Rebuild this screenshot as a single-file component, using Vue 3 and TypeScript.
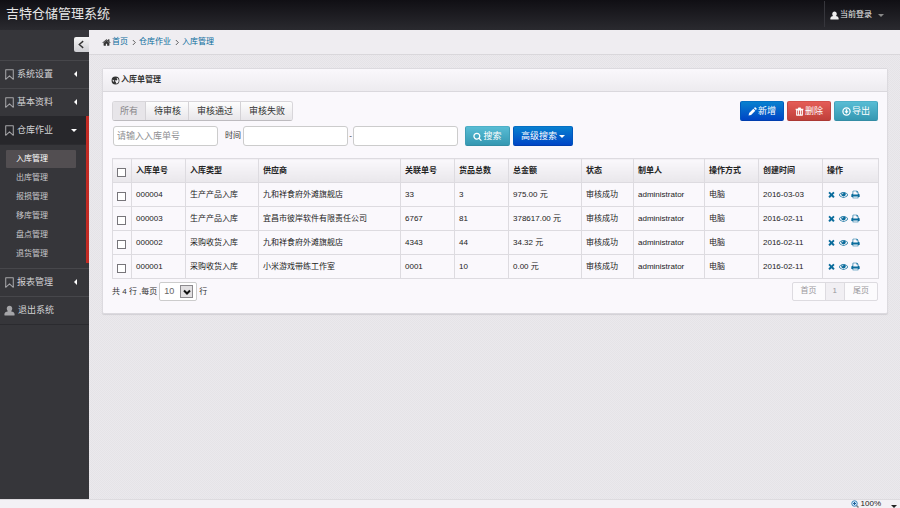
<script setup lang="ts">
import { ref, computed } from 'vue'

interface Column { title: string; width: number }
interface Order {
  no: string; type: string; supplier: string; ref: string; qty: string
  amount: string; status: string; creator: string; mode: string; date: string
}

const tabs = ['所有', '待审核', '审核通过', '审核失败']
const activeTab = ref(0)
const subItems = ['入库管理', '出库管理', '报损管理', '移库管理', '盘点管理', '退货管理']
const keyword = ref('')
const from = ref('')
const to = ref('')
const pageSize = ref('10')
const picked = ref<string[]>([])

const columns: Column[] = [
  { title: '入库单号', width: 54 },
  { title: '入库类型', width: 73 },
  { title: '供应商', width: 142 },
  { title: '关联单号', width: 54 },
  { title: '货品总数', width: 54 },
  { title: '总金额', width: 73 },
  { title: '状态', width: 52 },
  { title: '制单人', width: 71 },
  { title: '操作方式', width: 54 },
  { title: '创建时间', width: 64 },
  { title: '操作', width: 56 },
]

const common = { status: '审核成功', creator: 'administrator', mode: '电脑' }
const orders: Order[] = [
  { no: '000004', type: '生产产品入库', supplier: '九和祥食府外滩旗舰店', ref: '33', qty: '3', amount: '975.00 元', date: '2016-03-03', ...common },
  { no: '000003', type: '生产产品入库', supplier: '宜昌市彼岸软件有限责任公司', ref: '6767', qty: '81', amount: '378617.00 元', date: '2016-02-11', ...common },
  { no: '000002', type: '采购收货入库', supplier: '九和祥食府外滩旗舰店', ref: '4343', qty: '44', amount: '34.32 元', date: '2016-02-11', ...common },
  { no: '000001', type: '采购收货入库', supplier: '小米游戏带练工作室', ref: '0001', qty: '10', amount: '0.00 元', date: '2016-02-11', ...common },
]

const allPicked = computed({
  get: () => picked.value.length === orders.length,
  set: (on: boolean) => { picked.value = on ? orders.map(o => o.no) : [] },
})
</script>

<template>
  <svg class="defs" aria-hidden="true">
    <symbol id="i-home" viewBox="0 0 1792 1792"><path d="M1472 992v480q0 26-19 45t-45 19h-384v-384h-256v384h-384q-26 0-45-19t-19-45v-480q0-1 .5-3t.5-3l575-474 575 474q1 2 1 6zm223-69l-62 74q-8 9-21 11h-3q-13 0-21-7l-692-577-692 577q-12 8-24 7-13-2-21-11l-62-74q-8-10-7-23.5t11-21.5l719-599q32-26 76-26t76 26l244 204v-195q0-14 9-23t23-9h192q14 0 23 9t9 23v408l219 182q10 8 11 21.5t-7 23.5z" /></symbol>
    <symbol id="i-search" viewBox="0 0 1792 1792"><path d="M1216 832q0-185-131.500-316.500t-316.500-131.500-316.500 131.500-131.500 316.500 131.500 316.500 316.500 131.500 316.500-131.500 131.500-316.500zm512 832q0 52-38 90t-90 38q-54 0-90-38l-343-342q-179 124-399 124-143 0-273.500-55.500t-225-150-150-225-55.500-273.500 55.500-273.500 150-225 225-150 273.500-55.500 273.500 55.500 225 150 150 225 55.500 273.500q0 220-124 399l343 343q37 37 37 90z" /></symbol>
    <symbol id="i-times" viewBox="0 0 1792 1792"><path d="M1490 1322q0 40-28 68l-136 136q-28 28-68 28t-68-28l-294-294-294 294q-28 28-68 28t-68-28l-136-136q-28-28-28-68t28-68l294-294-294-294q-28-28-28-68t28-68l136-136q28-28 68-28t68 28l294 294 294-294q28-28 68-28t68 28l136 136q28 28 28 68t-28 68l-294 294 294 294q28 28 28 68z" /></symbol>
    <symbol id="i-eye" viewBox="0 0 1792 1792"><path d="M1664 960q-152-236-381-353 61 104 61 225 0 185-131.500 316.500t-316.500 131.500-316.500-131.500-131.500-316.500q0-121 61-225-229 117-381 353 133 205 333.500 326.500t434.500 121.500 434.500-121.500 333.500-326.500zm-720-384q0-20-14-34t-34-14q-125 0-214.500 89.500t-89.500 214.500q0 20 14 34t34 14 34-14 14-34q0-86 61-147t147-61q20 0 34-14t14-34zm848 384q0 34-20 69-140 230-376.500 368.500t-499.500 138.500-499.500-139-376.500-368q-20-35-20-69t20-69q140-229 376.500-368t499.500-139 499.500 139 376.500 368q20 35 20 69z" /></symbol>
    <symbol id="i-print" viewBox="0 0 1792 1792"><path fill-rule="evenodd" d="M448 1536h896v-256h-896zM448 896h896v-384h-160q-40 0-68-28t-28-68v-160h-640zM1728 960v416q0 32-32 32h-224v160q0 96-96 96h-960q-96 0-96-96v-160h-224q-32 0-32-32v-416q0-79 56-135t136-57h64v-544q0-96 96-96h672q40 0 88 20t76 48l152 152q28 28 48 76t20 88v256h64q79 0 135 57t57 135z" /></symbol>
    <symbol id="i-user" viewBox="0 0 16 16"><path d="M8 1c2.300 0 4 1.700 4 4.200 0 1.700-.8 3.100-1.800 3.900C13.300 9.600 15.500 11 15.500 14c0 .8-.6 1.300-1.400 1.300H1.900C1.100 15.300.5 14.800.5 14c0-3 2.200-4.400 5.300-4.900C4.800 8.300 4 6.900 4 5.200 4 2.700 5.700 1 8 1z" /></symbol>
    <symbol id="i-mark" viewBox="0 0 16 16"><path d="M2.500 1h11v14L8 10l-5.500 5z" fill="none" stroke="currentColor" stroke-width="1.500" stroke-linejoin="round" /></symbol>
    <symbol id="i-pencil" viewBox="0 0 16 16"><path d="M1 15l1-4.500L9.500 3 13 6.500 5.500 14zM10.500 2l1.300-1.300c.5-.5 1.200-.5 1.700 0l1.800 1.800c.5.5.5 1.200 0 1.700L14 5.500z" /></symbol>
    <symbol id="i-trash" viewBox="0 0 16 16"><path fill-rule="evenodd" d="M5 3l1-2h4l1 2h4v2h-1v9c0 1-.6 1.500-1.500 1.500h-9C2.600 15.500 2 15 2 14V5H1V3zM4 6v7.500h1.500V6zm3.200 0v7.500h1.600V6zm3.300 0v7.500H12V6z" /></symbol>
    <symbol id="i-down" viewBox="0 0 16 16"><circle cx="8" cy="8" r="6.400" fill="none" stroke="currentColor" stroke-width="2.200" /><path d="M6.700 4h2.600v3.500h2.200L8 11.800 4.500 7.500h2.200z" /></symbol>
    <symbol id="i-globe" viewBox="0 0 16 16"><path fill-rule="evenodd" d="M8 1a7 7 0 1 1 0 14A7 7 0 0 1 8 1zM8.500 2.500L11 3l-1 2 1.500 1L10 8l-2-.5L6.500 9 9 10.500 8.500 13l2 .5C12.800 12.500 13.700 10 13.700 8c0-3-2-5.200-5.200-5.500zM3 6l2.500 2L4.800 10.500 3 9z" /></symbol>
    <symbol id="i-zoom" viewBox="0 0 16 16"><path d="M10 10l5 5" stroke="#7a7f86" stroke-width="3" /><circle cx="7" cy="7" r="5.500" fill="#d8ebf8" stroke="#3c86bd" stroke-width="2" /><path d="M7 4v6M4 7h6" stroke="#1c5f9c" stroke-width="2" /></symbol>
  </svg>

  <div class="app">
    <header class="top">
      <h1>吉特仓储管理系统</h1>
      <button class="login" type="button">
        <svg class="ic"><use href="#i-user" /></svg>当前登录<i class="caret" />
      </button>
    </header>

    <div class="body">
      <nav class="side">
        <div class="side-head">
          <button class="collapse" type="button" aria-label="收起菜单">
            <svg viewBox="0 0 8 8"><path d="M5.500 1L2 4l3.500 3" fill="none" stroke="#333" stroke-width="1.200" /></svg>
          </button>
        </div>
        <a class="item" href="#"><svg class="ic big"><use href="#i-mark" /></svg>系统设置<i class="left" /></a>
        <a class="item" href="#"><svg class="ic big"><use href="#i-mark" /></svg>基本资料<i class="left" /></a>
        <div class="group">
          <a class="item open" href="#"><svg class="ic big"><use href="#i-mark" /></svg>仓库作业<i class="caret" /></a>
          <ul>
            <li v-for="(s, i) in subItems" :key="s"><a href="#" :class="{ on: i === 0 }">{{ s }}</a></li>
          </ul>
        </div>
        <a class="item after" href="#"><svg class="ic big"><use href="#i-mark" /></svg>报表管理<i class="left" /></a>
        <a class="item last" href="#"><svg class="ic big"><use href="#i-user" /></svg>退出系统</a>
      </nav>

      <main>
        <div class="crumbs">
          <svg class="ic"><use href="#i-home" /></svg>
          <a href="#">首页</a><svg class="sep" viewBox="0 0 6 8"><path d="M1 1l3 3-3 3" /></svg>
          <a href="#">仓库作业</a><svg class="sep" viewBox="0 0 6 8"><path d="M1 1l3 3-3 3" /></svg>
          <a href="#">入库管理</a>
        </div>

        <section class="panel">
          <h2><svg class="ic"><use href="#i-globe" /></svg>入库单管理</h2>
          <div class="content">
            <div class="bar">
              <div class="tabs">
                <button v-for="(t, i) in tabs" :key="t" type="button" :class="{ on: activeTab === i }" @click="activeTab = i">{{ t }}</button>
              </div>
              <div class="actions">
                <button class="btn blue" type="button"><svg class="ic"><use href="#i-pencil" /></svg>新增</button>
                <button class="btn red" type="button"><svg class="ic"><use href="#i-trash" /></svg>删除</button>
                <button class="btn teal" type="button"><svg class="ic"><use href="#i-down" /></svg>导出</button>
              </div>
            </div>

            <form class="filters" @submit.prevent>
              <input v-model="keyword" type="text" placeholder="请输入入库单号" aria-label="入库单号">
              <label for="from">时间</label>
              <input id="from" v-model="from" type="text">
              <span class="dash">-</span>
              <input v-model="to" type="text" aria-label="结束时间">
              <button class="btn teal find" type="submit"><svg class="ic"><use href="#i-search" /></svg>搜索</button>
              <button class="btn blue more" type="button">高级搜索<i class="caret" /></button>
            </form>

            <table>
              <colgroup>
                <col class="pick">
                <col v-for="c in columns" :key="c.title" :style="{ width: c.width + 'px' }">
              </colgroup>
              <thead>
                <tr>
                  <th><input v-model="allPicked" type="checkbox" aria-label="全选"></th>
                  <th v-for="c in columns" :key="c.title">{{ c.title }}</th>
                </tr>
              </thead>
              <tbody>
                <tr v-for="o in orders" :key="o.no">
                  <td><input v-model="picked" type="checkbox" :value="o.no" :aria-label="o.no"></td>
                  <td>{{ o.no }}</td>
                  <td>{{ o.type }}</td>
                  <td>{{ o.supplier }}</td>
                  <td>{{ o.ref }}</td>
                  <td>{{ o.qty }}</td>
                  <td>{{ o.amount }}</td>
                  <td>{{ o.status }}</td>
                  <td>{{ o.creator }}</td>
                  <td>{{ o.mode }}</td>
                  <td>{{ o.date }}</td>
                  <td>
                    <div class="ops">
                      <a href="#" aria-label="删除"><svg class="ic"><use href="#i-times" /></svg></a>
                      <a href="#" aria-label="查看"><svg class="ic"><use href="#i-eye" /></svg></a>
                      <a href="#" aria-label="打印"><svg class="ic"><use href="#i-print" /></svg></a>
                    </div>
                  </td>
                </tr>
              </tbody>
            </table>

            <div class="foot">
              <div class="size">
                <label for="size">共 4 行 ,每页</label>
                <span class="select">
                  <select id="size" v-model="pageSize"><option>10</option><option>20</option><option>50</option></select>
                  <span class="drop"><svg viewBox="0 0 10 10"><path d="M2 3.500l3 3 3-3" /></svg></span>
                </span>
                <span>行</span>
              </div>
              <div class="pager">
                <a href="#">首页</a><a class="on" href="#">1</a><a href="#">尾页</a>
              </div>
            </div>
          </div>
        </section>
      </main>
    </div>

    <footer class="status">
      <svg class="ic"><use href="#i-zoom" /></svg><span>100%</span><i class="caret" />
    </footer>
  </div>
</template>

<style>
body { overflow: hidden; }
</style>

<style scoped>
.defs { position: absolute; width: 0; height: 0; }
.app {
  height: 100vh; display: flex; flex-direction: column; overflow: hidden;
  font: 8px/12px "Liberation Sans", "Noto Sans CJK SC", sans-serif; color: #333;
}
.app * { box-sizing: border-box; }
button, input, select { font: inherit; color: inherit; margin: 0; }
a { text-decoration: none; color: #0a6c9c; }
.ic { width: 9px; height: 9px; fill: currentColor; flex: none; }
.ic.big { width: 11px; height: 11px; color: #a5a5a8; }
.caret { width: 0; height: 0; border: 3px solid transparent; border-top-color: currentColor; border-bottom: 0; }
.left { width: 0; height: 0; border: 3px solid transparent; border-right-color: #fff; border-left: 0; margin-left: auto; }

.top {
  height: 30px; flex: none; display: flex; align-items: center; justify-content: space-between;
  padding: 0 16px 2px 6px; color: #fff; background: linear-gradient(#100f14, #2a2a2f);
}
h1 { margin: 0; font-size: 13px; line-height: 18px; font-weight: 400; color: #e6e6e6; }
.login {
  display: flex; align-items: center; gap: 1px; height: 26px; padding: 2px 0 0 5px;
  border: 0; border-left: 1px solid #36363c; background: none; color: #eee;
}
.login .caret { margin-left: 5px; color: #888; }

.body { flex: 1; min-height: 0; display: flex; }
.side { width: 89px; flex: none; background: #36363a; overflow: hidden; }
.side-head { height: 30px; padding-top: 7px; display: flex; justify-content: flex-end; align-items: flex-start; }
.collapse {
  width: 15px; height: 15px; padding: 3px; display: flex; border: 0; border-radius: 2px 0 0 2px;
  background: linear-gradient(#f5f5f5, #cfcfd3);
}
.collapse svg { width: 9px; height: 9px; }
.item {
  height: 29px; display: flex; align-items: center; gap: 2px; padding: 0 12px 1px 4px;
  font-size: 9px; color: #d2d2d4; border-top: 1px solid #47474b; border-bottom: 1px solid #2b2b2f;
}
.item + .item, .group { margin-top: -1px; }
.item.open { background: #27272b; border-top-color: #27272b; }
.item .caret { margin-left: auto; color: #fff; }
.item.last { gap: 3px; }
.group { border-right: 3px solid #c22b24; }
.group .item { padding-right: 9px; }
.item.after { margin-top: 5px; }
ul { list-style: none; margin: 0; padding: 5px 10px 0 6px; display: flex; flex-direction: column; gap: 1px; }
li a { display: block; height: 18px; padding-left: 10px; line-height: 17px; border-radius: 1px; color: #c8c8ca; }
li a.on { background: #524e51; color: #fff; }

main {
  flex: 1; min-width: 0; background-color: #e8e6ea;
  background-image: repeating-conic-gradient(#e5e3e7 0 25%, #ebe9ed 0 50%); background-size: 2px 2px;
}
.crumbs {
  height: 25px; display: flex; align-items: center; padding: 0 13px; background: #efedf1;
  border-bottom: 1px solid #d9d7db;
}
.crumbs .ic { margin-right: 1px; }
.sep { width: 5px; height: 7px; margin: 0 2px 0 4px; fill: none; stroke: #444; }
.panel { margin: 13px 12px 0 13px; background: #faf8fc; border: 1px solid #dcdadf; border-radius: 2px; box-shadow: 0 1px 1px #d2d0d5; }
h2 {
  margin: 0; height: 23px; display: flex; align-items: center; gap: 1px; padding: 0 8px;
  font-size: 8px; line-height: 12px; background: linear-gradient(#faf8fc, #edebef); border-bottom: 1px solid #dad8dd;
}
.content { padding: 9px 9px 12px; }
.bar { display: flex; justify-content: space-between; }
.tabs { display: flex; border: 1px solid #d8d6da; border-bottom-color: #bdbbbf; border-radius: 3px; overflow: hidden; }
.tabs button {
  height: 18px; padding: 0 7px 0 8px; font-size: 9px; line-height: 17px; border: 0; border-right: 1px solid #d4d2d6;
  background: linear-gradient(#fdfdfd, #e8e6ea);
}
.tabs button:first-child { padding-left: 7px; }
.tabs button:last-child { border-right: 0; }
.tabs .on { background: #e7e5e9; color: #88868a; }
.actions { display: flex; gap: 3px; }
.btn {
  height: 20px; display: flex; align-items: center; justify-content: center; gap: 1px; width: 44px; padding: 0;
  font-size: 9px; color: #fff; border: 1px solid; border-radius: 2px;
}
.blue { background: linear-gradient(#0780cf, #0045c6); border-color: #0570c4 #0058bd #003eae; }
.red { background: linear-gradient(#e45c57, #c0403a); border-color: #d4504b #bd4742 #ac3833; }
.teal { background: linear-gradient(#58bcd4, #3598b2); border-color: #4db0c8 #3f9db6 #338ca4; }
.filters { display: flex; align-items: center; margin-top: 5px; padding-left: 1px; }
.filters input {
  width: 105px; height: 20px; padding: 0 3px; font-size: 9px; background: #fff;
  border: 1px solid #ccc; border-radius: 3px; outline-offset: 0;
}
.filters input::placeholder { color: #8f8f93; opacity: 1; }
.filters label { margin: 0 2px 0 7px; }
.dash { width: 5px; text-align: center; }
.find { width: 45px; margin-left: 7px; }
.more { width: 60px; margin-left: 3px; }
.more .caret { margin-left: 1px; }

table { width: 100%; margin-top: 12px; table-layout: fixed; border-collapse: collapse; color: #222; }
.pick { width: 19px; }
th, td { height: 24px; padding: 1px 0 0 4px; border: 1px solid #dddbe0; text-align: left; vertical-align: middle; white-space: nowrap; }
th { background: linear-gradient(#faf8fc, #e9e7eb); padding-top: 0; }
th:first-child, td:first-child { padding-top: 3px; }
td:last-child { padding-top: 0; }
table input {
  appearance: none; display: block; width: 9px; height: 9px; border: 1px solid #77757a; background: #fff;
}
table input:checked { background: #1279a8; }
.ops { display: flex; gap: 3px; }
.ops a { display: flex; }

.foot { display: flex; justify-content: space-between; margin-top: 3px; }
.size { display: flex; align-items: center; gap: 2px; }
.select { position: relative; display: flex; }
select {
  appearance: none; width: 38px; height: 19px; padding: 0 0 1px 4px; font-size: 9px; color: #666;
  background: #fff; border: 1px solid #ccc; border-radius: 2px;
}
.drop {
  position: absolute; right: 4px; top: 3px; width: 13px; height: 13px; display: flex; align-items: center; justify-content: center;
  background: #e2e0e2; border: 1px solid #8c8a8e; pointer-events: none;
}
.drop svg { width: 10px; height: 10px; fill: none; stroke: #111; stroke-width: 2; }
.pager { display: flex; border: 1px solid #dddbe0; border-radius: 2px; background: #fcfbfd; }
.pager a { height: 17px; padding: 0 8px; line-height: 16px; color: #99979b; }
.pager a + a { border-left: 1px solid #dddbe0; }
.pager .on { padding: 0 7px; background: #f1eff3; }

.status {
  height: 9px; flex: none; display: flex; align-items: flex-end; justify-content: flex-end;
  padding-right: 3px; background: #f3f1f5; border-top: 1px solid #dddbdf; color: #222;
}
.status .ic { width: 8px; height: 8px; }
.status span { margin: 0 10px 0 2px; line-height: 8px; }
</style>
